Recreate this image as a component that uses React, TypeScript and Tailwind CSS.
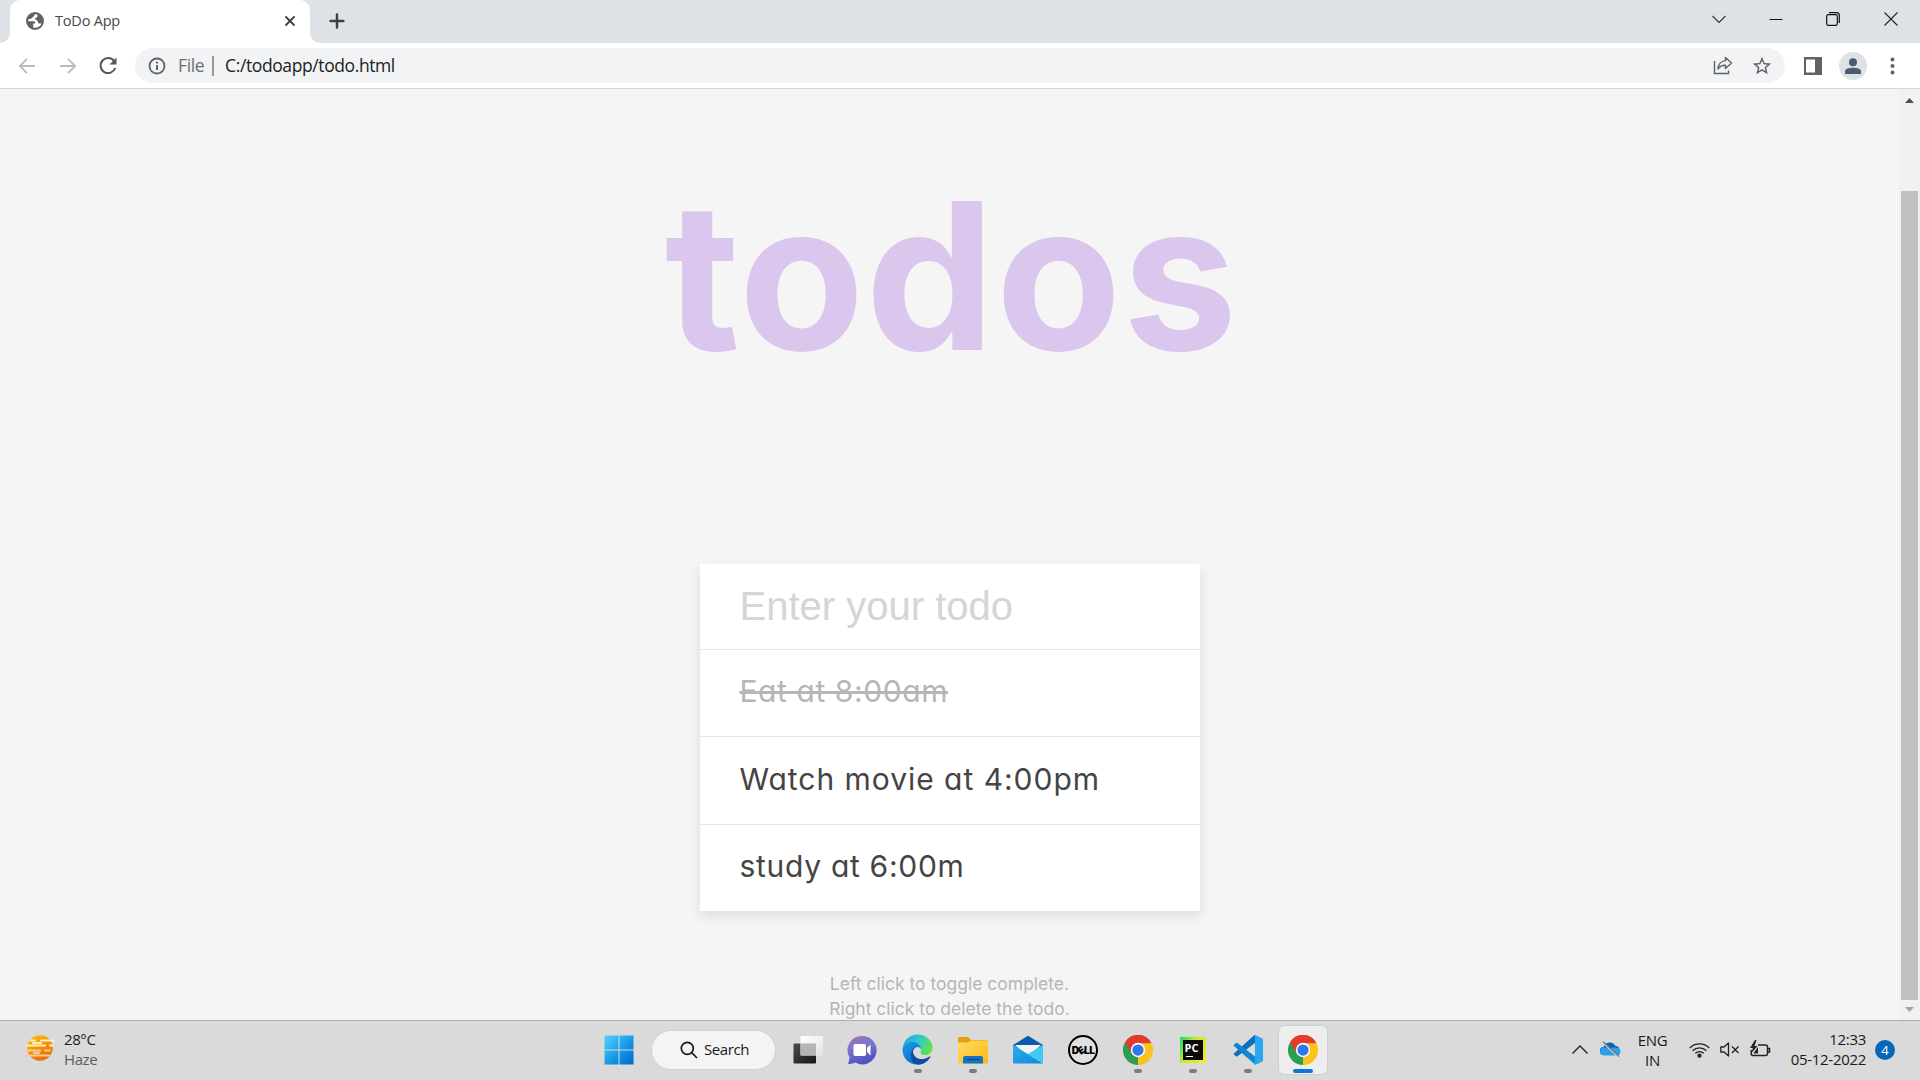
import React from "react";
import { X, Plus } from "lucide-react";

type IconProps = { className?: string };

function Globe() {
  return (
    <svg width="18" height="18" viewBox="0 0 18 18">
      <circle cx="9" cy="9" r="9" fill="#5f6368" />
      <path d="M8.6 2C9 4.200 7 4.500 6.400 5.600C5.700 7 4 6.600 2.300 7.500L2 9.300H7.700C8.900 9.400 9.300 10.400 9.200 11.400L7.200 11.600V15.600C11 16.600 14.500 14.500 15.700 11.500H13.300C11.500 11.500 12.200 8.300 10.300 8C8.700 7.800 8.600 6.200 10 5.800C11.600 5.300 11.500 4.200 11.600 2.700Z" fill="#fff" />
    </svg>
  );
}

function BackArrow({ className = "" }: IconProps) {
  return (
    <svg className={className} width="18" height="18" viewBox="0 0 18 18" fill="none" stroke="#b9bbbe" strokeWidth="1.8">
      <path d="M17 9H2M9 1.800L1.800 9L9 16.200" />
    </svg>
  );
}

function Reload() {
  return (
    <svg width="20" height="20" viewBox="0 0 20 20" fill="none">
      <path d="M16.200 5.200A7.500 7.500 0 1 0 17.200 12" stroke="#54575b" strokeWidth="2" />
      <path d="M18.500 1.500V8.500H11.500Z" fill="#54575b" />
    </svg>
  );
}

function Info() {
  return (
    <svg width="18" height="18" viewBox="0 0 18 18" fill="none">
      <circle cx="9" cy="9" r="7.500" stroke="#5f6368" strokeWidth="1.800" />
      <path d="M9 8V13M9 4.800V6.600" stroke="#5f6368" strokeWidth="2" />
    </svg>
  );
}

function Share() {
  return (
    <svg width="20" height="19" viewBox="0 0 20 19" fill="none" stroke="#5f6368" strokeWidth="1.400">
      <path d="M1.500 5V17.500H15.500V14.500" />
      <path d="M12.500 1.500L18.500 7L12.500 12.500V9.300C9 9.200 6.800 10.200 5 13C5.200 8.500 8 5 12.500 4.600Z" strokeLinejoin="round" />
    </svg>
  );
}

function Star() {
  return (
    <svg width="22" height="22" viewBox="0 0 24 24" fill="#5f6368">
      <path d="M22 9.240l-7.190-.620L12 2 9.190 8.630 2 9.240l5.460 4.730L5.820 21 12 17.270 18.180 21l-1.630-7.030L22 9.240zM12 15.400l-3.760 2.270 1-4.280-3.320-2.880 4.380-.380L12 6.100l1.710 4.040 4.380.380-3.320 2.880 1 4.280L12 15.400z" />
    </svg>
  );
}

function TabStrip() {
  return (
    <div className="flex h-[43px] bg-[#dee1e6]">
      <div className="flex w-2.5 items-end bg-white">
        <div className="h-full w-full rounded-br-[10px] bg-[#dee1e6]" />
      </div>
      <div className="flex h-full w-[300px] bg-[#dee1e6]">
        <div className="flex h-full w-full items-center rounded-t-[10px] bg-white pr-3 pb-px pl-4">
          <Globe />
          <span className="ml-[11px] text-[14.500px] tracking-[-0.200px] text-[#45484c]">ToDo App</span>
          <X className="ml-auto" size={16} strokeWidth={2.700} color="#3c4043" />
        </div>
      </div>
      <div className="w-2.5 bg-white">
        <div className="h-full w-full rounded-bl-[10px] bg-[#dee1e6]" />
      </div>
      <Plus className="mt-[10px] ml-1.5" size={22} strokeWidth={2.700} color="#3c4043" />
      <div className="mr-[22px] ml-auto flex h-[37px] items-center">
        <svg width="14" height="14" viewBox="0 0 14 14" fill="none" stroke="#333" strokeWidth="1.100">
          <path d="M.5 4L7 10.500L13.500 4" />
        </svg>
        <svg className="ml-[43px]" width="14" height="14" viewBox="0 0 14 14">
          <path d="M.5 7H13.500V8H.5Z" fill="#111" />
        </svg>
        <svg className="ml-[43px]" width="14" height="14" viewBox="0 0 14 14" fill="none" stroke="#111" strokeWidth="1.200">
          <rect x=".7" y="2.700" width="10.600" height="10.600" rx="1.600" />
          <path d="M3 .700H10.500Q13.300 .700 13.300 3.500V11" />
        </svg>
        <svg className="ml-11" width="14" height="14" viewBox="0 0 14 14" stroke="#222" strokeWidth="1.100">
          <path d="M.5 .500L13.500 13.500M13.500 .500L.500 13.500" />
        </svg>
      </div>
    </div>
  );
}

function Toolbar() {
  return (
    <div className="flex h-[46px] items-center border-b border-[#d5d6d8] bg-white pl-[18px]">
      <BackArrow />
      <BackArrow className="ml-[23px] rotate-180" />
      <div className="ml-[21px]">
        <Reload />
      </div>
      <div className="ml-[17px] flex h-[35px] w-[1650px] items-center rounded-full bg-[#f1f3f4] pr-[12px] pl-[13px]">
        <Info />
        <span className="ml-3 text-[17.500px] tracking-[-0.400px] text-[#6b6f74]">File</span>
        <span className="ml-[8px] h-5 w-[2px] bg-[#97999c]" />
        <span className="ml-[11px] text-[17.500px] tracking-[-0.400px] text-[#202124]">C:/todoapp/todo.html</span>
        <div className="ml-auto flex items-center gap-[18px]">
          <Share />
          <Star />
        </div>
      </div>
      <svg className="ml-[19px]" width="18" height="18" viewBox="0 0 18 18">
        <path d="M0 0H18V18H0ZM2 2.500V15.500H11V2.500Z" fill="#5f6368" fillRule="evenodd" />
      </svg>
      <svg className="ml-[17px]" width="28" height="28" viewBox="0 0 28 28">
        <circle cx="14" cy="14" r="14" fill="#dee1e6" />
        <circle cx="14" cy="10.200" r="4" fill="#4d5b70" />
        <path d="M6 22V19.500C6 16.800 10 15.800 14 15.800S22 16.800 22 19.500V22Z" fill="#4d5b70" />
      </svg>
      <svg className="ml-[23px]" width="5" height="18" viewBox="0 0 5 18" fill="#5f6368">
        <circle cx="2.500" cy="2.500" r="2" />
        <circle cx="2.500" cy="9" r="2" />
        <circle cx="2.500" cy="15.500" r="2" />
      </svg>
    </div>
  );
}

function Scrollbar() {
  return (
    <div className="flex w-[21px] flex-col items-center bg-[#f1f1f1] pt-[9px] pb-[7px]">
      <svg width="9" height="5" viewBox="0 0 9 5" fill="#505050">
        <path d="M0 5L4.500 0L9 5Z" />
      </svg>
      <div className="mt-[88px] h-[809px] w-[17px] bg-[#c1c1c1]" />
      <svg className="mt-[7px]" width="9" height="5" viewBox="0 0 9 5" fill="#a3a3a3">
        <path d="M0 0L4.500 5L9 0Z" />
      </svg>
    </div>
  );
}

function TodoPage() {
  return (
    <div className="flex h-[931px] overflow-hidden bg-[#f5f5f5]">
      <main className="flex flex-1 flex-col items-center font-['Inter','Noto_Sans',sans-serif] [font-feature-settings:'cv11']">
        <h1 className="mt-[86px] h-[389px] shrink-0 pl-1 text-[205px] leading-[200px] font-[650] tracking-[1px] text-[#dbc7ed]">todos</h1>
        <form className="w-[500px] shrink-0 bg-white shadow-[0_5px_12.500px_rgba(0,0,0,0.100)]">
          <div className="h-[85px] px-10 pt-[19px] font-['Liberation_Sans',Arial,sans-serif] text-[40px] leading-[46px] text-[#d5d5d5]">
            Enter your todo
          </div>
          <ul className="text-[30px] leading-[45px] text-[#444]">
            <li className="h-[87px] border-t border-[#e5e5e5] px-10 pt-[19px] tracking-[0.580px] text-[#b6b6b6] line-through decoration-[3px]">
              Eat at 8:00am
            </li>
            <li className="h-[88px] border-t border-[#e5e5e5] px-10 pt-[20px] tracking-[0.970px]">Watch movie at 4:00pm</li>
            <li className="h-[87px] border-t border-[#e5e5e5] px-10 pt-[19px] tracking-[0.700px]">study at 6:00m</li>
          </ul>
        </form>
        <small className="mt-[60px] shrink-0 text-center text-[17.500px] leading-[25px] text-[#b5b5b5]">
          Left click to toggle complete.
          <br />
          Right click to delete the todo.
        </small>
      </main>
      <Scrollbar />
    </div>
  );
}

function Haze() {
  return (
    <svg className="-mt-1" width="30" height="28" viewBox="0 0 30 28">
      <defs>
        <linearGradient id="sun" x1="0" y1="0" x2=".5" y2="1">
          <stop stopColor="#ffc400" />
          <stop offset="1" stopColor="#ec6a0c" />
        </linearGradient>
      </defs>
      <circle cx="15" cy="14" r="12.700" fill="url(#sun)" />
      <g stroke="#ffefc0" strokeWidth="2.200" strokeLinecap="round">
        <path d="M6 6.500H10M16 6.500H29M3 11.500H20M25 11.500H28M8 9H16" />
        <path d="M1 16.500H15M20 16.500H25M1 21.500H24M9 19H14" stroke="#efcf94" />
      </g>
    </svg>
  );
}

function WindowsLogo() {
  return (
    <svg width="30" height="30" viewBox="0 0 30 30">
      <defs>
        <linearGradient id="win" x1="0" y1="0" x2="1" y2="1">
          <stop stopColor="#4fd4ff" />
          <stop offset=".6" stopColor="#1193e4" />
          <stop offset="1" stopColor="#0067c8" />
        </linearGradient>
      </defs>
      <path d="M1.500 .500H14.500V14.500H.5V1.500ZM15.500 .500H29.500V14.500H15.500ZM.5 15.500H14.500V29.500H.5ZM15.500 15.500H29.500V29.500H15.500Z" fill="url(#win)" />
    </svg>
  );
}

function TaskView() {
  return (
    <svg width="30" height="30" viewBox="0 0 30 30">
      <defs>
        <linearGradient id="tvDark" x1="0" y1="0" x2="1" y2="1">
          <stop stopColor="#4c4c4c" />
          <stop offset="1" stopColor="#161616" />
        </linearGradient>
        <linearGradient id="tvLight" x1="0" y1="0" x2="1" y2="1">
          <stop stopColor="#fff" />
          <stop offset="1" stopColor="#e3e3e3" />
        </linearGradient>
      </defs>
      <rect x=".5" y="8.500" width="22.500" height="20" rx="1" fill="url(#tvDark)" />
      <rect x="7.500" y="1" width="22.500" height="19.500" rx="1" fill="url(#tvLight)" />
      <rect x="7.500" y="8.500" width="15.500" height="12" fill="#b5b5b3" />
    </svg>
  );
}

function Chat() {
  return (
    <svg className="mr-px" width="30" height="30" viewBox="0 0 30 30">
      <defs>
        <linearGradient id="chat" x1=".2" y1="0" x2=".5" y2="1">
          <stop stopColor="#a06fb8" />
          <stop offset=".4" stopColor="#7a76cf" />
          <stop offset="1" stopColor="#4b4fc0" />
        </linearGradient>
      </defs>
      <path d="M15 1A14.200 14.200 0 1 1 8.500 27.600Q5 29.300 1.200 29L2.600 22.500A14.200 14.200 0 0 1 15 1Z" fill="url(#chat)" />
      <rect x="6.500" y="9" width="12.500" height="12" rx="1.800" fill="#fff" />
      <path d="M20 13L23.500 9.500V20.500L20 17Z" fill="#fff" />
    </svg>
  );
}

function Edge() {
  return (
    <svg width="31" height="31" viewBox="0 0 31 31">
      <defs>
        <linearGradient id="edgeTop" x1="0" y1=".2" x2="1" y2=".6">
          <stop stopColor="#1ea7e4" />
          <stop offset=".5" stopColor="#31c8cf" />
          <stop offset="1" stopColor="#63e33f" />
        </linearGradient>
        <linearGradient id="edgeLeft" x1="0" y1="0" x2=".6" y2="1">
          <stop stopColor="#1b9de2" />
          <stop offset="1" stopColor="#0b6fd0" />
        </linearGradient>
      </defs>
      <path d="M.5 15.500C1 6 8 .500 15.500 .500C24.500 .500 30.500 7 30.500 13.500C30.500 18 27.500 21.300 23 21.300C19.500 21.300 17.300 19.800 18.700 17.500C19.600 15.500 18.500 11.500 13.500 9.500C8 7.500 2 10.500 .5 15.500Z" fill="url(#edgeTop)" />
      <path d="M.5 15.500C1.500 10 6.500 7.500 11 8C16 8.500 19 12 19 15.200C17 12.500 12 12.800 10.500 18C9 24 13 29 19 30C9 32.500 .5 25.500 .5 15.500Z" fill="url(#edgeLeft)" />
      <path d="M14 12.600C9.500 15 10.500 21 14.500 23.800C19 26.500 24.500 24.500 27.500 22.400C28.300 22 28.700 22.500 28.300 23.200C25.500 28 20.500 31 15.500 30.500C7.500 29.500 6.500 16.500 14 12.600Z" fill="#0d4f9c" />
      <path d="M13.500 14C11.800 16 12 19.500 14.300 21.700C16 23.500 19.500 24.300 23.500 23.200C26.500 22.400 28 21 28 21C25 21.800 19.500 21.500 18.300 19.200C17.900 18.400 18.700 17.900 18.900 16.500C19 13.500 15.500 12 13.500 14Z" fill="#dadada" />
    </svg>
  );
}

function Explorer() {
  return (
    <svg width="30" height="30" viewBox="0 0 30 30">
      <defs>
        <linearGradient id="folder" x1="0" y1="0" x2="1" y2="1">
          <stop stopColor="#ffda69" />
          <stop offset="1" stopColor="#fcb912" />
        </linearGradient>
      </defs>
      <path d="M0 3.300Q0 2 1.300 2H10L13 5H28Q30 5 30 7V15H0Z" fill="#e0a011" />
      <path d="M0 7.500H10.500L13 5.500H29Q30 5.500 30 6.500V27.500Q30 28.500 29 28.500H1Q0 28.500 0 27.500Z" fill="url(#folder)" />
      <path d="M5 28.500V23Q5 21 7 21H23Q25 21 25 23V28.500Z" fill="#1373c4" />
      <path d="M8.500 24.500H21.500" stroke="#0b4f91" strokeWidth="1.300" />
    </svg>
  );
}

function Mail() {
  return (
    <svg width="30" height="30" viewBox="0 0 30 30">
      <defs>
        <linearGradient id="mail" x1="0" y1="0" x2="1" y2="1">
          <stop stopColor="#2cb0f0" />
          <stop offset="1" stopColor="#0e86db" />
        </linearGradient>
      </defs>
      <path d="M0 10L15 .800L30 10V16H0Z" fill="#0b5cad" />
      <path d="M2 10H28L15 22Z" fill="#f4f4f4" />
      <path d="M0 10L30 28.500H1Q0 28.500 0 27.500Z" fill="url(#mail)" />
      <path d="M30 10L15 19L30 28.500Z" fill="#3ccbf4" />
    </svg>
  );
}

function Dell() {
  return (
    <div className="ml-px flex size-[30px] items-center justify-center rounded-full border-2 border-black bg-[#e0e0e0] font-['Inter',sans-serif] text-[10px] leading-none font-black tracking-[-0.500px] text-black">
      <span>D</span>
      <span className="-rotate-[35deg]">E</span>
      <span>LL</span>
    </div>
  );
}

function Chrome() {
  return (
    <svg width="30" height="30" viewBox="0 0 48 48">
      <path d="M24 24L3.200 12A24 24 0 0 1 44.800 12Z" fill="#e33b2e" />
      <path d="M24 24L44.800 12A24 24 0 0 1 24 48Z" fill="#fcc31e" />
      <path d="M24 24L24 48A24 24 0 0 1 3.200 12Z" fill="#2d9e4f" />
      <path d="M24 13H45.300A24 24 0 0 0 3.200 12L14.500 29.500Z" fill="#e33b2e" />
      <path d="M33.500 29.500L24 48A24 24 0 0 0 45.300 13H24Z" fill="#fcc31e" />
      <circle cx="24" cy="24" r="11.500" fill="#fff" />
      <circle cx="24" cy="24" r="9" fill="#2f78ec" />
    </svg>
  );
}

function PyCharm() {
  return (
    <div className="flex size-[26px] items-center justify-center bg-[linear-gradient(120deg,#1fd98b_0%,#4be34a_15%,#c8e82e_40%,#f0ec2a_100%)]">
      <div className="flex size-5 flex-col bg-[#0a0a0a] pt-[3px] pl-[2px] font-['Open_Sans',sans-serif]">
        <span className="text-[11px] leading-[9px] font-bold text-white">PC</span>
        <span className="mt-1 ml-px h-px w-[7px] bg-white" />
      </div>
    </div>
  );
}

function VSCode() {
  return (
    <svg width="30" height="30" viewBox="0 0 30 30">
      <path d="M1.200 19.200Q.2 20 1.200 20.800L3 22.300Q3.700 22.800 4.500 22.300L22 9V.500Z" fill="#0d6fb8" transform="translate(0 -1)" />
      <path d="M1.200 9.500L3 8Q3.700 7.600 4.500 8L22 21.500V29.500L1.200 11.300Q.3 10.300 1.200 9.500Z" fill="#0f86d3" />
      <path d="M22 0L29 3.200Q30 3.700 30 4.800V25.200Q30 26.300 29 26.800L22 30Q21 29.500 22 28V2Q21 .500 22 0Z" fill="#27a8f2" />
    </svg>
  );
}

type TaskItemProps = { children: React.ReactNode; state?: "idle" | "running" | "active" };

function TaskItem({ children, state = "idle" }: TaskItemProps) {
  return (
    <div className="flex h-full w-[55px] items-center justify-center">
      <div
        className={
          state === "active"
            ? "flex h-12 w-12 flex-col items-center rounded-[5px] bg-[#eeeeee] shadow-[0_0_1px_1px_rgba(0,0,0,0.050)]"
            : "flex h-12 w-12 flex-col items-center"
        }
      >
        <div className="flex h-[43px] items-center pt-[5px]">{children}</div>
        {state === "running" && <span className="h-1 w-2 rounded-full bg-[#7d7d7d]" />}
        {state === "active" && <span className="h-1 w-5 rounded-full bg-[#0a78d4]" />}
      </div>
    </div>
  );
}

function SystemTray() {
  return (
    <div className="ml-auto flex h-full items-center pr-[25px] text-[15px] leading-5 text-[#1b1b1b]">
      <svg width="16" height="9" viewBox="0 0 16 9" fill="none" stroke="#222" strokeWidth="1.400">
        <path d="M.5 8.500L8 1L15.500 8.500" />
      </svg>
      <svg className="ml-3" width="21" height="17" viewBox="0 0 21 17">
        <path d="M4 14A4 4 0 0 1 3.500 6A6.500 6.500 0 0 1 15.500 5A4.700 4.700 0 0 1 17 14Z" fill="#0b62bd" />
        <path d="M3 6.500Q6 5.500 8.500 8L13 6.500Q20.500 6 20.500 10.500Q20 14.500 17 14.500H4Q0 14 0 10.500Q.5 7 3 6.500Z" fill="#2b9fe9" />
        <path d="M3 1.500L18.500 16" stroke="#dadada" strokeWidth="1.800" />
        <path d="M3 .800L19 15.500" stroke="#777" strokeWidth="1.300" />
      </svg>
      <div className="ml-[16px] w-[31px] text-center tracking-[-0.300px]">
        ENG
        <br />
        IN
      </div>
      <svg className="ml-[21px]" width="21" height="16" viewBox="0 0 21 16" fill="none" stroke="#222" strokeWidth="1.300">
        <path d="M.7 6A13.500 13.500 0 0 1 20.300 6M3.600 8.700A9.700 9.700 0 0 1 17.400 8.700M6.300 11.300A6 6 0 0 1 14.700 11.300" />
        <circle cx="10.500" cy="13.700" r="1.500" fill="#222" />
      </svg>
      <svg className="ml-[10px]" width="20" height="15" viewBox="0 0 20 15" fill="none" stroke="#222" strokeWidth="1.300">
        <path d="M.8 5H4L8.500 1V14L4 10H.8ZM12 4.500L18.500 11M18.500 4.500L12 11" strokeLinejoin="round" />
      </svg>
      <svg className="-mt-0.5 ml-[10px]" width="21" height="17" viewBox="0 0 21 17" fill="none" stroke="#222" strokeWidth="1.500">
        <path d="M8 5H15.500Q17.500 5 17.500 7V13.500Q17.500 15.500 15.500 15.500H3Q1.200 15.500 1.200 13.500V10" />
        <path d="M18 8.500H19.500V12H18" />
        <path d="M5 0L0 8H2.800L1.500 13L7.500 6H4.500L6.500 0ZM4 12.500L8 7V13.500H3.500Z" fill="#222" stroke="none" />
      </svg>
      <div className="-mt-px ml-[19px] w-[76px] text-right tracking-[-0.300px] whitespace-nowrap">
        12:33
        <br />
        05-12-2022
      </div>
      <div className="ml-[9px] flex size-5 items-center justify-center rounded-full bg-[#0567b8] text-[13px] text-white">4</div>
    </div>
  );
}

function Taskbar() {
  return (
    <div className="flex h-[60px] items-center border-t border-[#adadad] bg-[#dadada] pb-0.5">
      <div className="flex w-[604px] items-center pl-[25px]">
        <Haze />
        <div className="-mt-px ml-[9px] text-[15px] leading-5 tracking-[-0.400px] text-[#1b1b1b]">
          28°C
          <br />
          <span className="text-[#5c5c5c]">Haze</span>
        </div>
      </div>
      <WindowsLogo />
      <div className="mr-[5px] ml-[18px] flex h-[38px] w-[123px] items-center rounded-full bg-[#f4f4f4] pl-7 shadow-[0_0_1px_1px_rgba(0,0,0,0.040)]">
        <svg width="18" height="18" viewBox="0 0 18 18" fill="none" stroke="#1b1b1b" strokeWidth="1.700">
          <circle cx="7.300" cy="7.300" r="6" />
          <path d="M11.700 11.700L17 17" />
        </svg>
        <span className="ml-1.5 text-[15px] tracking-[-0.400px] text-[#1b1b1b]">Search</span>
      </div>
      <TaskItem><TaskView /></TaskItem>
      <TaskItem><Chat /></TaskItem>
      <TaskItem state="running"><Edge /></TaskItem>
      <TaskItem state="running"><Explorer /></TaskItem>
      <TaskItem><Mail /></TaskItem>
      <TaskItem><Dell /></TaskItem>
      <TaskItem state="running"><Chrome /></TaskItem>
      <TaskItem state="running"><PyCharm /></TaskItem>
      <TaskItem state="running"><VSCode /></TaskItem>
      <TaskItem state="active"><Chrome /></TaskItem>
      <SystemTray />
    </div>
  );
}

export default function App() {
  return (
    <div className="h-[1080px] w-[1920px] overflow-hidden font-['Open_Sans','Noto_Sans',sans-serif]">
      <TabStrip />
      <Toolbar />
      <TodoPage />
      <Taskbar />
    </div>
  );
}
